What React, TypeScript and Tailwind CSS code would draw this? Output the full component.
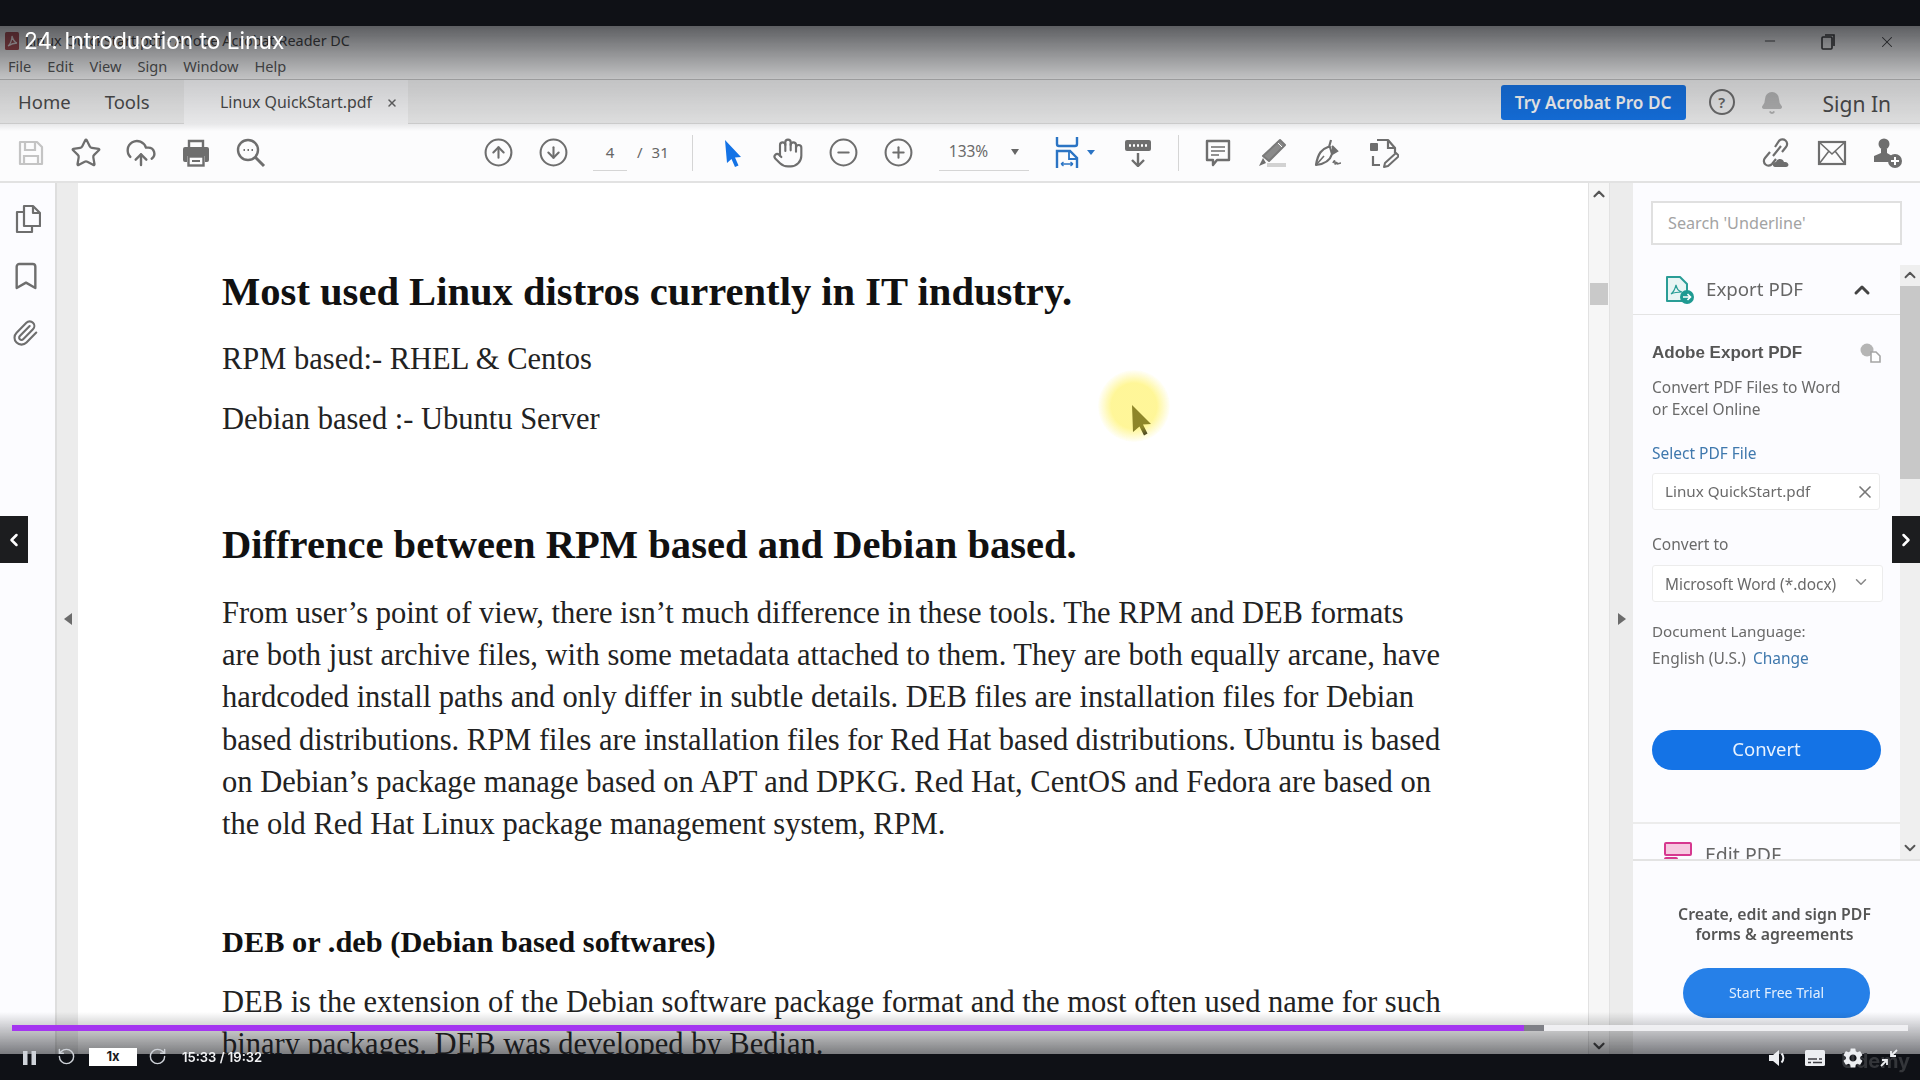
import React from "react";
import { ChevronUp, ChevronDown, ChevronLeft, ChevronRight, X, RotateCcw, RotateCw, Hand, Star, CloudUpload, CircleArrowUp, CircleArrowDown, CircleMinus, CirclePlus, Bookmark, Paperclip, Bell, Minus } from "lucide-react";
import { MdSettings } from "react-icons/md";

const G = "#6e6e6e";
const ui = "font-['Noto_Sans','Open_Sans',sans-serif]";

function Save() {
  return (
    <svg width="26" height="28" viewBox="0 0 26 28" fill="none" stroke="#c4c4c4" strokeWidth="2.2">
      <path d="M2 3h17l5 5v17H2z" strokeLinejoin="round" />
      <path d="M7 3v8h10V3M6 25v-8h14v8" />
    </svg>
  );
}
function Print() {
  return (
    <svg width="28" height="28" viewBox="0 0 28 28" fill="none">
      <path d="M7 9V2h14v7" stroke={G} strokeWidth="2.4" />
      <path d="M3 8h22a2 2 0 012 2v11a2 2 0 01-2 2h-2v-6H5v6H3a2 2 0 01-2-2V10a2 2 0 012-2z" fill={G} />
      <rect x="6.500" y="17.500" width="15" height="9" stroke={G} strokeWidth="2.4" />
      <path d="M10 22h8" stroke={G} strokeWidth="2" />
    </svg>
  );
}
function DocSearch() {
  return (
    <svg width="30" height="30" viewBox="0 0 30 30" fill="none" stroke={G} strokeWidth="2.4">
      <circle cx="12" cy="12" r="10" />
      <path d="M19 19l9 9" strokeWidth="3" />
      <path d="M7.500 12h1.500M11.500 12h1.500M15.500 12h1.500" strokeWidth="2" />
    </svg>
  );
}
function Arrow() {
  return (
    <svg width="18" height="28" viewBox="0 0 18 28" fill="#1473e6">
      <path d="M1 1l16 17-6 .5 3.500 8-3.500 1.500-3.500-8L3 24z" />
    </svg>
  );
}
function Fit() {
  return (
    <svg width="24" height="32" viewBox="0 0 24 32" fill="none" stroke="#2b74c4" strokeWidth="2.4">
      <path d="M2 0v7a2 2 0 002 2h16a2 2 0 002-2V0" />
      <path d="M2 31V14h13l7 7v10" />
      <path d="M14 14v8h8" strokeWidth="1.800" />
      <path d="M6 27h12M6 27l2.500-2M6 27l2.500 2M18 27l-2.500-2M18 27l-2.500 2" strokeWidth="1.400" />
    </svg>
  );
}
function Keys() {
  return (
    <svg width="26" height="28" viewBox="0 0 26 28" fill="none">
      <rect x="0" y="1" width="26" height="11" rx="2" fill={G} />
      <path d="M4 6.500h18" stroke="#fff" strokeWidth="2.400" strokeDasharray="2 2" />
      <path d="M13 14v12M7 21l6 6 6-6" stroke={G} strokeWidth="2.400" />
    </svg>
  );
}
function Comment() {
  return (
    <svg width="26" height="28" viewBox="0 0 26 28" fill="none" stroke={G} strokeWidth="2.400">
      <path d="M2 2h22v19H12l-4 5v-5H2z" strokeLinejoin="round" />
      <path d="M6 8h14M6 12h14M6 16h8" strokeWidth="1.400" />
    </svg>
  );
}
function Pen() {
  return (
    <svg width="30" height="30" viewBox="0 0 30 30" fill="none">
      <path d="M22 2l5 5L11 23l-6-5z" fill="#8a8a8a" stroke="#7a7a7a" strokeWidth="2" strokeLinejoin="round" />
      <path d="M20 5l4 4" stroke="#fff" strokeWidth="1" />
      <path d="M5 20l-4 8 7-3z" fill={G} />
      <path d="M9 27h19" stroke="#d2d2d2" strokeWidth="4" />
    </svg>
  );
}
function SignIcon() {
  return (
    <svg width="30" height="30" viewBox="0 0 30 30" fill="none" stroke={G} strokeWidth="2.200">
      <path d="M15 9C9 11 5 15 3 27c9-1 14-4 16-11l-2-7z" strokeLinejoin="round" />
      <path d="M16 9l2-7M19 16l5-3-5-5" fill={G} />
      <path d="M3 27l8-9" strokeWidth="1.600" />
      <path d="M20 25c1-3 2-3 2 0s2-2 2 0 2 0 4 0" strokeWidth="1.600" />
    </svg>
  );
}
function ShareFile() {
  return (
    <svg width="30" height="32" viewBox="0 0 30 32" fill="none" stroke={G} strokeWidth="2.200">
      <path d="M8 3h11l7 8v5" strokeLinejoin="round" />
      <path d="M19 3v8h7" />
      <rect x="1" y="6" width="8" height="8" rx="1" fill={G} stroke="none" />
      <path d="M4 19v9h7" />
      <path d="M27 16l3 3-11 10-4 1 1-4z" strokeWidth="2" strokeLinejoin="round" />
    </svg>
  );
}
function LinkCloud() {
  return (
    <svg width="32" height="32" viewBox="0 0 32 32" fill="none">
      <path d="M13 19l8-10M10 15l-5 6a4.500 4.500 0 007 6l4-5M15 10l4-6a4.500 4.500 0 017 6l-4 5" stroke={G} strokeWidth="2.200" />
      <path d="M15 30c-3 0-3-5 1-5 1-4 7-4 8 0 5-1 6 5 2 5z" fill={G} />
    </svg>
  );
}
function MailIcon() {
  return (
    <svg width="30" height="26" viewBox="0 0 30 26" fill="none" stroke={G} strokeWidth="2.200">
      <rect x="2" y="2" width="26" height="22" />
      <path d="M2 2l13 12L28 2M2 24l10-13M28 24L18 11" strokeWidth="1.600" />
    </svg>
  );
}
function UserAdd() {
  return (
    <svg width="30" height="32" viewBox="0 0 30 32" fill="none">
      <circle cx="11" cy="7" r="5.500" fill={G} />
      <path d="M8 12h6v4l5 3v6H1v-6l7-3z" fill={G} />
      <circle cx="22" cy="24" r="7" fill={G} />
      <path d="M22 20v8M18 24h8" stroke="#fff" strokeWidth="2" />
    </svg>
  );
}
function PagesIcon() {
  return (
    <svg width="26" height="30" viewBox="0 0 26 30" fill="none" stroke={G} strokeWidth="2.200" strokeLinejoin="round">
      <path d="M9 2h9l7 7v13H9z" />
      <path d="M18 2v7h7" />
      <path d="M9 8H2v20h15v-6" />
    </svg>
  );
}
function PdfLogo() {
  return (
    <svg width="14" height="18" viewBox="0 0 14 18">
      <rect width="14" height="18" rx="1.500" fill="#a8484c" />
      <path d="M3 14c2-1 4-6 4-10 1 4 2 6 5 7-3 0-6 1-9 3z" fill="none" stroke="#f1e4e4" strokeWidth="1.300" />
    </svg>
  );
}
function ExportIcon() {
  return (
    <svg width="30" height="30" viewBox="0 0 30 30" fill="none">
      <path d="M2 2h13l7 7v17H2z" stroke="#2a9d96" strokeWidth="2" strokeLinejoin="round" fill="#e8f5f4" />
      <path d="M6 19c3-2 4-5 5-9 1 4 2 6 6 7-4 0-7 0-11 2z" stroke="#2a9d96" strokeWidth="1.200" />
      <circle cx="22" cy="22" r="7" fill="#1f9a92" />
      <path d="M18 22h7M22.500 19l3 3-3 3" stroke="#fff" strokeWidth="1.600" />
    </svg>
  );
}
function CloudCopy() {
  return (
    <svg width="21" height="20" viewBox="0 0 21 20" fill="none">
      <circle cx="7" cy="7" r="6.500" fill="#b5b5b5" />
      <path d="M11 9h5l4 4v6h-9z" fill="#fff" stroke="#a5a5a5" strokeWidth="1.600" />
    </svg>
  );
}
function EditIcon() {
  return (
    <svg width="28" height="24" viewBox="0 0 28 24" fill="none">
      <rect x="1" y="1" width="26" height="12" rx="1" fill="#f6c9e0" stroke="#d6388f" strokeWidth="2" />
      <rect x="1" y="16" width="12" height="8" rx="1" stroke="#d6388f" strokeWidth="2" />
      <path d="M18 18h9" stroke="#d6388f" strokeWidth="1.600" />
    </svg>
  );
}
function Pause() {
  return (
    <svg width="13" height="14" viewBox="0 0 13 14" fill="#cfd3d9">
      <rect width="4.500" height="14" />
      <rect x="8.500" width="4.500" height="14" />
    </svg>
  );
}
function Volume() {
  return (
    <svg width="20" height="20" viewBox="0 0 20 20" fill="#eceef1">
      <path d="M1 7h4l6-5v16l-6-5H1z" />
      <path d="M13.500 5.500c2.500 2.500 2.500 6.500 0 9" fill="none" stroke="#eceef1" strokeWidth="2" />
    </svg>
  );
}
function Captions() {
  return (
    <svg width="20" height="16" viewBox="0 0 20 16">
      <rect width="20" height="16" rx="1.500" fill="#eceef1" />
      <path d="M3 9h9M14 9h3M3 12.500h3M8 12.500h9" stroke="#3c3d42" strokeWidth="1.500" />
    </svg>
  );
}
function Shrink() {
  return (
    <svg width="18" height="18" viewBox="0 0 18 18" fill="none" stroke="#eceef1" strokeWidth="1.800">
      <path d="M17 1l-6 6M11 2v5h5M1 17l6-6M2 11h5v5" />
    </svg>
  );
}
function PageLines({ lines }: { lines: string[] }) {
  return (
    <div className="mt-[22px]">
      {lines.map((l) => (
        <div key={l} className="h-[42.2px] leading-[42.2px] text-[30.5px] whitespace-nowrap text-[#222]">{l}</div>
      ))}
    </div>
  );
}

export default function App() {
  return (
    <div className={`relative w-[1920px] h-[1080px] overflow-hidden bg-white ${ui}`}>
      <div className="w-full h-full flex flex-col blur-[0.5px]">
        <div className="h-[26px] shrink-0 bg-[#0f1116]" />
        {/* window chrome */}
        <div className="h-[54px] shrink-0 bg-[#f4f4f4] border-b border-[#c0c0c0] flex">
          <div className="flex-1 flex flex-col">
            <div className="h-[27px] flex items-center pl-[5px] pt-[3px] gap-[6px] text-[14.4px] text-[#3d3d3d]">
              <PdfLogo />
              <span>Linux QuickStart.pdf - Adobe Acrobat Reader DC</span>
            </div>
            <div className="flex pl-[8px] gap-[16px] text-[14.6px] leading-[26px] text-[#555]">
              <span>File</span><span>Edit</span><span>View</span><span>Sign</span><span>Window</span><span>Help</span>
            </div>
          </div>
          <div className="flex items-start pt-[7px] pr-[24px] gap-[42px] text-[#3a3a3a]">
            <Minus size={16} strokeWidth={1.4} />
            <svg width="14" height="16" viewBox="0 0 14 16" fill="none" stroke="#333" strokeWidth="1.600" className="mt-[1px] mx-[1px]"><rect x="1" y="3" width="10" height="12" rx="1" /><path d="M4 1h9v11" /></svg>
            <X size={18} strokeWidth={1.4} />
          </div>
        </div>
        {/* tabs */}
        <div className="h-[44px] shrink-0 bg-[#f0f0f0] border-b border-[#dcdcdc] flex items-stretch text-[#4b4b4b]">
          <div className="w-[184px] flex items-center pl-[18px] pt-[1px] gap-[34px] text-[18.5px]">
            <span>Home</span><span>Tools</span>
          </div>
          <div className="w-[224px] bg-[#fbfbfc] flex items-center pl-[36px] gap-[14px] pt-[1px] text-[15.9px] -mb-px">
            <span>Linux QuickStart.pdf</span>
            <X size={12} strokeWidth={3} className="text-[#666]" />
          </div>
          <div className="flex-1" />
          <div className="w-[185px] h-[35px] mt-[5px] rounded-[3px] bg-[#1473e6] text-white font-semibold text-[17.2px] flex items-center justify-center">Try Acrobat Pro DC</div>
          <div className="w-[26px] h-[26px] mt-[9px] ml-[23px] rounded-full border-2 border-[#6e6e6e] text-[15px] font-semibold flex items-center justify-center text-[#666]">?</div>
          <Bell size={24} fill="#b5b5b5" stroke="#b5b5b5" className="mt-[11px] ml-[25px]" />
          <span className="ml-[39px] mr-[29px] text-[21px] mt-[9px]">Sign In</span>
        </div>
        {/* toolbar */}
        <div className="h-[59px] shrink-0 bg-[#fcfcfd] border-b-2 border-[#e2e2e2] flex items-center">
          <div className="flex items-center pl-[15px] gap-[23px]">
            <div className="w-[32px] flex justify-center"><Save /></div>
            <div className="w-[32px] flex justify-center"><Star size={32} stroke={G} strokeWidth={1.7} /></div>
            <div className="w-[32px] flex justify-center"><CloudUpload size={32} stroke={G} strokeWidth={1.8} /></div>
            <div className="w-[32px] flex justify-center"><Print /></div>
            <div className="w-[32px] flex justify-center"><DocSearch /></div>
          </div>
          <div className="flex items-center ml-[216px] gap-[24px]">
            <CircleArrowUp size={31} stroke={G} strokeWidth={1.6} />
            <CircleArrowDown size={31} stroke={G} strokeWidth={1.6} />
          </div>
          <div className="ml-[24px] w-[34px] h-[37px] border-b border-[#d5d5d5] flex items-center justify-center text-[15px] text-[#666]">4</div>
          <span className="ml-[10px] text-[15px] text-[#666]">/</span>
          <span className="ml-[9px] text-[15px] text-[#666]">31</span>
          <div className="ml-[23px] h-[36px] w-px bg-[#d5d5d5]" />
          <div className="ml-[31px]"><Arrow /></div>
          <div className="ml-[30px]"><Hand size={32} stroke={G} strokeWidth={1.6} /></div>
          <div className="ml-[24px]"><CircleMinus size={31} stroke={G} strokeWidth={1.6} /></div>
          <div className="ml-[24px]"><CirclePlus size={31} stroke={G} strokeWidth={1.6} /></div>
          <div className="ml-[25px] w-[90px] h-[37px] border-b border-[#d5d5d5] flex items-center pl-[10px] text-[15.5px] text-[#6a6a6a]">
            <span>133%</span>
            <span className="ml-[23px] w-0 h-0 border-x-[4px] border-x-transparent border-t-[6px] border-t-[#666]" />
          </div>
          <div className="ml-[26px]"><Fit /></div>
          <span className="ml-[8px] w-0 h-0 border-x-[4px] border-x-transparent border-t-[5px] border-t-[#2b74c4]" />
          <div className="ml-[30px]"><Keys /></div>
          <div className="ml-[27px] h-[36px] w-px bg-[#d5d5d5]" />
          <div className="ml-[26px]"><Comment /></div>
          <div className="ml-[27px]"><Pen /></div>
          <div className="ml-[25px]"><SignIcon /></div>
          <div className="ml-[26px]"><ShareFile /></div>
          <div className="ml-[361px]"><LinkCloud /></div>
          <div className="ml-[25px]"><MailIcon /></div>
          <div className="ml-[26px]"><UserAdd /></div>
        </div>
        {/* body */}
        <div className="flex-1 min-h-0 flex">
          <div className="w-[55px] bg-[#fcfcff] flex flex-col items-center pt-[21px] shrink-0">
            <PagesIcon />
            <Bookmark size={32} stroke={G} strokeWidth={1.8} className="mt-[26px] -ml-[3px]" />
            <Paperclip size={28} stroke={G} strokeWidth={1.8} className="mt-[27px] -ml-[5px]" />
          </div>
          <div className="w-[23px] shrink-0 bg-[#ececec] border-l-2 border-[#dedede] flex items-center justify-center">
            <span className="w-0 h-0 border-y-[6px] border-y-transparent border-r-[8px] border-r-[#6b6b6b]" />
          </div>
          {/* page */}
          <div className="flex-1 min-w-0 bg-white overflow-hidden pl-[144px] font-['Liberation_Serif',serif]">
            <div className="pt-[84px] h-[50px] box-content leading-[50px] text-[40.6px] font-bold text-[#111] whitespace-nowrap">Most used Linux distros currently in IT industry.</div>
            <div className="mt-[21px] h-[42px] leading-[42px] text-[30.5px] text-[#222] whitespace-nowrap">RPM based:- RHEL &amp; Centos</div>
            <div className="mt-[18px] h-[42px] leading-[42px] text-[30.5px] text-[#222] whitespace-nowrap">Debian based :- Ubuntu Server</div>
            <div className="mt-[80px] h-[50px] leading-[50px] text-[40.6px] font-bold text-[#111] whitespace-nowrap">Diffrence between RPM based and Debian based.</div>
            <PageLines lines={[
              "From user’s point of view, there isn’t much difference in these tools. The RPM and DEB formats",
              "are both just archive files, with some metadata attached to them. They are both equally arcane, have",
              "hardcoded install paths and only differ in subtle details. DEB files are installation files for Debian",
              "based distributions. RPM files are installation files for Red Hat based distributions. Ubuntu is based",
              "on Debian’s package manage based on APT and DPKG. Red Hat, CentOS and Fedora are based on",
              "the old Red Hat Linux package management system, RPM.",
            ]} />
            <div className="mt-[76px] h-[42px] leading-[42px] text-[30.4px] font-bold text-[#111] whitespace-nowrap">DEB or .deb (Debian based softwares)</div>
            <div className="mt-[18px] h-[42px] leading-[42px] text-[30.5px] text-[#222] whitespace-nowrap">DEB is the extension of the Debian software package format and the most often used name for such</div>
            <div className="h-[42px] leading-[42px] text-[30.5px] text-[#222] whitespace-nowrap">binary packages. DEB was developed by Bedian.</div>
          </div>
          {/* page scrollbar */}
          <div className="w-[22px] shrink-0 bg-[#f6f6f6] border-x border-[#e2e2e2] flex flex-col items-center">
            <ChevronUp size={18} strokeWidth={3} className="text-[#555] mt-[2px]" />
            <div className="mt-[80px] w-[18px] h-[22px] bg-[#c9c9c9]" />
            <div className="flex-1" />
            <ChevronDown size={18} strokeWidth={3} className="text-[#444] mb-[0px]" />
          </div>
          <div className="w-[23px] shrink-0 bg-[#ececec] flex items-center justify-center">
            <span className="w-0 h-0 border-y-[6px] border-y-transparent border-l-[8px] border-l-[#6b6b6b]" />
          </div>
          {/* right panel */}
          <div className="w-[287px] shrink-0 bg-[#fcfcff] flex flex-col text-[#6a6a6a]">
            <div className="ml-[18px] mt-[18px] w-[251px] h-[44px] shrink-0 bg-white border-2 border-[#e0e0e0] flex items-center pl-[15px] text-[16.2px] text-[#a3a3a3]">Search 'Underline'</div>
            <div className="mt-[20px] h-[596px] shrink-0 flex overflow-hidden border-b-2 border-[#e3e3e3]">
              <div className="w-[267px] flex flex-col">
                <div className="h-[50px] shrink-0 border-b border-[#e4e4e4] flex items-center pl-[32px]">
                  <ExportIcon />
                  <span className="ml-[11px] text-[18.7px] text-[#666]">Export PDF</span>
                  <ChevronUp size={24} strokeWidth={3} className="ml-[47px] text-[#444]" />
                </div>
                <div className="pl-[19px] flex flex-col">
                  <div className="mt-[26px] flex items-center h-[24px] text-[17px] font-bold text-[#555] font-['Liberation_Sans',sans-serif]">
                    <span>Adobe Export PDF</span>
                    <span className="ml-[58px]"><CloudCopy /></span>
                  </div>
                  <div className="mt-[11px] text-[15.5px] leading-[22px]">Convert PDF Files to Word<br />or Excel Online</div>
                  <div className="mt-[22px] text-[15.5px] leading-[22px] text-[#3f78ad]">Select PDF File</div>
                  <div className="mt-[9px] w-[228px] h-[37px] bg-white border border-[#ececec] rounded-[3px] flex items-center justify-between pl-[12px] pr-[4px] text-[15.2px]">
                    <span>Linux QuickStart.pdf</span>
                    <X size={20} strokeWidth={2} className="text-[#777]" />
                  </div>
                  <div className="mt-[23px] text-[15.5px] leading-[22px]">Convert to</div>
                  <div className="mt-[10px] w-[231px] h-[37px] bg-white border border-[#ececec] rounded-[3px] flex items-center justify-between pl-[12px] pr-[12px] text-[15.4px]">
                    <span className="pt-[3px]">Microsoft Word (*.docx)</span>
                    <ChevronDown size={18} strokeWidth={2} className="text-[#888] -mt-[4px]" />
                  </div>
                  <div className="mt-[17px] text-[15.2px] leading-[24px]">Document Language:</div>
                  <div className="mt-[3px] text-[15.5px] leading-[24px]">English (U.S.)<span className="ml-[7px] text-[#3f78ad]">Change</span></div>
                  <div className="mt-[60px] w-[229px] h-[40px] pb-[2px] rounded-full bg-[#1473e6] text-[#e8f2fe] text-[18.5px] flex items-center justify-center">Convert</div>
                </div>
                <div className="mt-[52px] h-[2px] shrink-0 bg-[#ececec]" />
                <div className="pl-[31px] pt-[18px] flex items-start h-[40px] shrink-0">
                  <EditIcon />
                  <span className="ml-[13px] -mt-[2px] text-[19.5px] leading-[30px] text-[#666]">Edit PDF</span>
                </div>
              </div>
              <div className="w-[20px] bg-[#efefef] flex flex-col items-center">
                <ChevronUp size={18} strokeWidth={2.5} className="text-[#555] mt-[1px]" />
                <div className="w-full h-[193px] bg-[#c8c8c8] mt-[2px]" />
                <div className="flex-1" />
                <ChevronDown size={18} strokeWidth={2.5} className="text-[#555] mb-[2px]" />
              </div>
            </div>
            <div className="mt-[43px] w-[283px] text-center text-[15.8px] leading-[20px] font-semibold text-[#555]">Create, edit and sign PDF<br />forms &amp; agreements</div>
            <div className="mt-[24px] ml-[50px] w-[187px] h-[50px] pb-[1px] rounded-full bg-[#2680e8] text-[#e4effd] text-[14px] flex items-center justify-center">Start Free Trial</div>
          </div>
        </div>
        <div className="h-[25px] shrink-0" />
      </div>

      {/* video overlays */}
      <div className="absolute left-0 right-0 top-[26px] h-[105px] pointer-events-none bg-[linear-gradient(to_bottom,rgba(15,17,22,0.66),rgba(15,17,22,0.2)_52%,rgba(15,17,22,0.08)_94%,rgba(15,17,22,0)_100%)]" />
      <div className="absolute left-[24px] top-[25px] text-[22.7px] leading-[32px] text-white font-['Inter',sans-serif]">24. Introduction to Linux</div>

      {/* cursor highlight */}
      <svg className="absolute left-[1131px] top-[404px]" width="22" height="32" viewBox="0 0 22 32">
        <path d="M1 1l19 19-8 .5 4.500 9-3.500 2-4.500-9L2 28z" fill="#1c1d1f" />
      </svg>
      <div className="absolute left-[1098px] top-[370px] w-[72px] h-[72px] rounded-full opacity-50 bg-[radial-gradient(circle,#ffee33_0%,#ffee33_45%,rgba(255,238,51,0)_72%)]" />

      {/* prev / next */}
      <div className="absolute left-0 top-[516px] w-[28px] h-[47px] bg-[#1c1d1f] flex items-center justify-center">
        <ChevronLeft size={20} strokeWidth={3} className="text-white" />
      </div>
      <div className="absolute right-0 top-[516px] w-[28px] h-[47px] bg-[#1c1d1f] flex items-center justify-center">
        <ChevronRight size={20} strokeWidth={3} className="text-white" />
      </div>

      {/* player bottom */}
      <div className="absolute left-0 right-0 bottom-[26px] h-[42px] pointer-events-none bg-[linear-gradient(to_bottom,rgba(15,17,22,0),rgba(15,17,22,0.55))]" />
      <div className="absolute left-[12px] right-[12px] top-[1025px] h-[6px] flex bg-[#f3f3f6]/90">
        <div className="w-[1512px] bg-[#a435f0]" />
        <div className="w-[20px] bg-[#7f8087]" />
      </div>
      <div className="absolute left-0 right-0 bottom-0 h-[26px] bg-[#0f1116] flex items-start font-['Inter',sans-serif]">
        <div className="ml-[23px] -mt-[3px]"><Pause /></div>
        <RotateCcw size={19} stroke="#cfd3d9" strokeWidth={1.8} className="ml-[21px] -mt-[7px]" />
        <div className="ml-[13px] -mt-[6px] w-[48px] h-[18px] bg-white text-[#1c1d1f] text-[13px] font-bold flex items-center justify-center">1x</div>
        <RotateCw size={19} stroke="#cfd3d9" strokeWidth={1.8} className="ml-[11px] -mt-[7px]" />
        <span className="ml-[15px] -mt-[6px] text-[13px] leading-[18px] font-semibold text-[#f2f3f5]">15:33 / 19:32</span>
        <div className="flex-1" />
        <div className="relative flex items-center gap-[17px] -mt-[8px] mr-[22px]">
          <span className="absolute left-[73px] top-[0px] text-[20px] font-bold text-[#34363a]">Udemy</span>
          <div className="relative"><Volume /></div>
          <div className="relative"><Captions /></div>
          <MdSettings size={24} color="#eceef1" className="relative -mx-[1px]" />
          <div className="relative ml-[-1px]"><Shrink /></div>
        </div>
      </div>
    </div>
  );
}
